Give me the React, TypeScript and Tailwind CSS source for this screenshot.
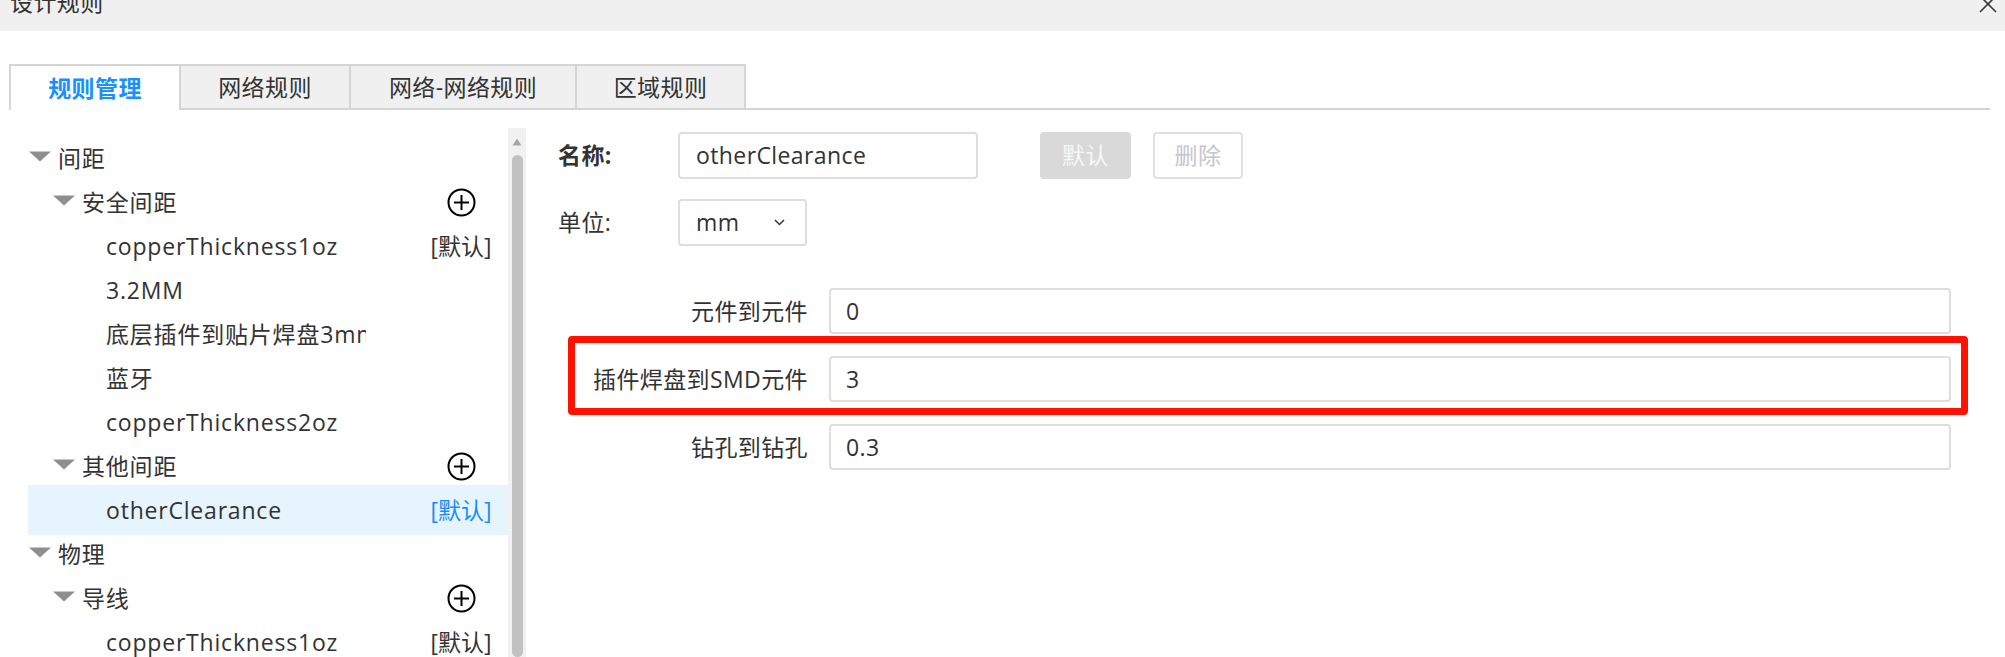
import React from "react";

type Row = {
  level: 1 | 2 | 3;
  label: string;
  plus?: boolean;
  def?: boolean;
  selected?: boolean;
};

const rows: Row[] = [
  { level: 1, label: "间距" },
  { level: 2, label: "安全间距", plus: true },
  { level: 3, label: "copperThickness1oz", def: true },
  { level: 3, label: "3.2MM" },
  { level: 3, label: "底层插件到贴片焊盘3mm" },
  { level: 3, label: "蓝牙" },
  { level: 3, label: "copperThickness2oz" },
  { level: 2, label: "其他间距", plus: true },
  { level: 3, label: "otherClearance", def: true, selected: true },
  { level: 1, label: "物理" },
  { level: 2, label: "导线", plus: true },
  { level: 3, label: "copperThickness1oz", def: true },
];

function Triangle() {
  return (
    <svg width="24" height="11" viewBox="0 0 24 11" className="shrink-0 mr-[6px] mt-[-4px]">
      <polygon points="1,0.5 23,0.5 12,10.5" fill="#8e8e8e" />
    </svg>
  );
}

function PlusCircle() {
  return (
    <svg width="29" height="29" viewBox="0 0 29 29">
      <circle cx="14.5" cy="14.5" r="13" fill="none" stroke="#000" strokeWidth="2" />
      <line x1="7" y1="14.5" x2="22" y2="14.5" stroke="#000" strokeWidth="2" />
      <line x1="14.5" y1="7" x2="14.5" y2="22" stroke="#000" strokeWidth="2" />
    </svg>
  );
}

function TreeRow({ row }: { row: Row }) {
  const rowCls = row.selected
    ? "flex items-center h-[50px] my-[-3px] bg-[#e5f4fd]"
    : "flex items-center h-[44px]";
  const padCls =
    row.level === 1 ? "pl-0" : row.level === 2 ? "pl-[24px]" : "pl-[78px]";
  return (
    <div className={`${rowCls} ${padCls}`}>
      {row.level < 3 && <Triangle />}
      <span className="flex-1 min-w-0">
        <span className="block max-w-[260px] overflow-hidden whitespace-nowrap">
          {row.label}
        </span>
      </span>
      <span className="w-[66px] mr-[14px] flex justify-center items-center whitespace-nowrap tracking-normal">
        {row.plus && <PlusCircle />}
        {row.def && (
          <span className={row.selected ? "text-[#1a8cf8]" : "text-[#333]"}>[默认]</span>
        )}
      </span>
    </div>
  );
}

function Field({ label, value }: { label: string; value: string }) {
  return (
    <div className="flex items-center h-[46px]">
      <div className="w-[268px] text-right whitespace-nowrap">{label}</div>
      <div className="ml-[21px] flex-1 h-[46px] border-2 border-[#dedede] rounded-[4px] flex items-center pl-[15px]">
        {value}
      </div>
    </div>
  );
}

export default function App() {
  return (
    <div className="w-[2005px] h-[657px] overflow-hidden bg-white flex flex-col text-[23px] tracking-[0.4px] text-[#333] font-['Open_Sans','Noto_Sans_CJK_SC',sans-serif]">
      {/* title bar */}
      <div className="h-[31px] shrink-0 bg-[#f0f0f0] relative overflow-hidden">
        <div className="ml-[10px] mt-[-9px] leading-[23px] text-[#333]">设计规则</div>
        <svg
          width="18"
          height="18"
          viewBox="0 0 18 18"
          className="absolute right-[8px] top-[-5px]"
        >
          <line x1="1" y1="1" x2="17" y2="17" stroke="#333" strokeWidth="1.6" />
          <line x1="17" y1="1" x2="1" y2="17" stroke="#333" strokeWidth="1.6" />
        </svg>
      </div>

      {/* tabs */}
      <div className="mt-[33px] h-[46px] shrink-0 flex pl-[9px] pr-[15px]">
        <div className="w-[170px] h-full border-l-2 border-t-2 border-[#d5d5d5] bg-white flex items-center justify-center font-bold text-[#1890ff]">
          规则管理
        </div>
        <div className="w-[170px] h-full border-l-2 border-t-2 border-b-2 border-[#d5d5d5] bg-[#f0f0f0] flex items-center justify-center">
          网络规则
        </div>
        <div className="w-[226px] h-full border-l-2 border-t-2 border-b-2 border-[#d5d5d5] bg-[#f0f0f0] flex items-center justify-center">
          网络-网络规则
        </div>
        <div className="w-[171px] h-full border-l-2 border-t-2 border-r-2 border-b-2 border-[#d5d5d5] bg-[#f0f0f0] flex items-center justify-center">
          区域规则
        </div>
        <div className="flex-1 h-full border-b-2 border-[#d5d5d5]" />
      </div>

      {/* body */}
      <div className="flex-1 min-h-0 flex">
        {/* left tree */}
        <div className="mt-[18px] ml-[28px] flex">
          <div className="w-[480px] pt-[8px] tracking-[0.8px]">
            {rows.map((r, i) => (
              <TreeRow key={i} row={r} />
            ))}
          </div>
          <div className="w-[18px] h-full bg-[#f1f1f1] flex flex-col items-center">
            <svg width="10" height="8" viewBox="0 0 10 8" className="mt-[10px] shrink-0">
              <polygon points="5,0.5 9.5,7.5 0.5,7.5" fill="#a8a8a8" />
            </svg>
            <div className="mt-[9px] w-[11px] flex-1 rounded-full bg-[#c1c1c1]" />
          </div>
        </div>

        {/* right form */}
        <div className="flex-1 ml-[14px] pl-[18px] pr-[54px] pt-[22px]">
          <div className="flex items-center h-[47px]">
            <div className="w-[120px] font-bold">名称:</div>
            <div className="w-[300px] h-[47px] border-2 border-[#dedede] rounded-[4px] flex items-center pl-[16px]">
              otherClearance
            </div>
            <div className="ml-[62px] w-[91px] h-[47px] rounded-[4px] bg-[#d9d9d9] text-[#f7f7f7] flex items-center justify-center">
              默认
            </div>
            <div className="ml-[22px] w-[90px] h-[47px] rounded-[4px] border-2 border-[#e0e0e0] bg-white text-[#c3c6cc] flex items-center justify-center">
              删除
            </div>
          </div>

          <div className="mt-[20px] flex items-center h-[47px]">
            <div className="w-[120px]">单位:</div>
            <div className="w-[129px] h-[47px] border-2 border-[#dedede] rounded-[4px] flex items-center pl-[16px]">
              <span className="flex-1">mm</span>
              <svg width="11" height="7" viewBox="0 0 11 7" className="mr-[20px]">
                <polyline points="1,1 5.5,5.5 10,1" fill="none" stroke="#333" strokeWidth="1.5" />
              </svg>
            </div>
          </div>

          <div className="relative mt-[42px] flex flex-col gap-[22px] ml-[-18px]">
            <Field label="元件到元件" value="0" />
            <Field label="插件焊盘到SMD元件" value="3" />
            <Field label="钻孔到钻孔" value="0.3" />
            <div className="absolute left-[28px] right-[-17px] top-[48px] h-[79px] border-[7px] border-[#ff1200] rounded-[4px]" />
          </div>
        </div>
      </div>
    </div>
  );
}
